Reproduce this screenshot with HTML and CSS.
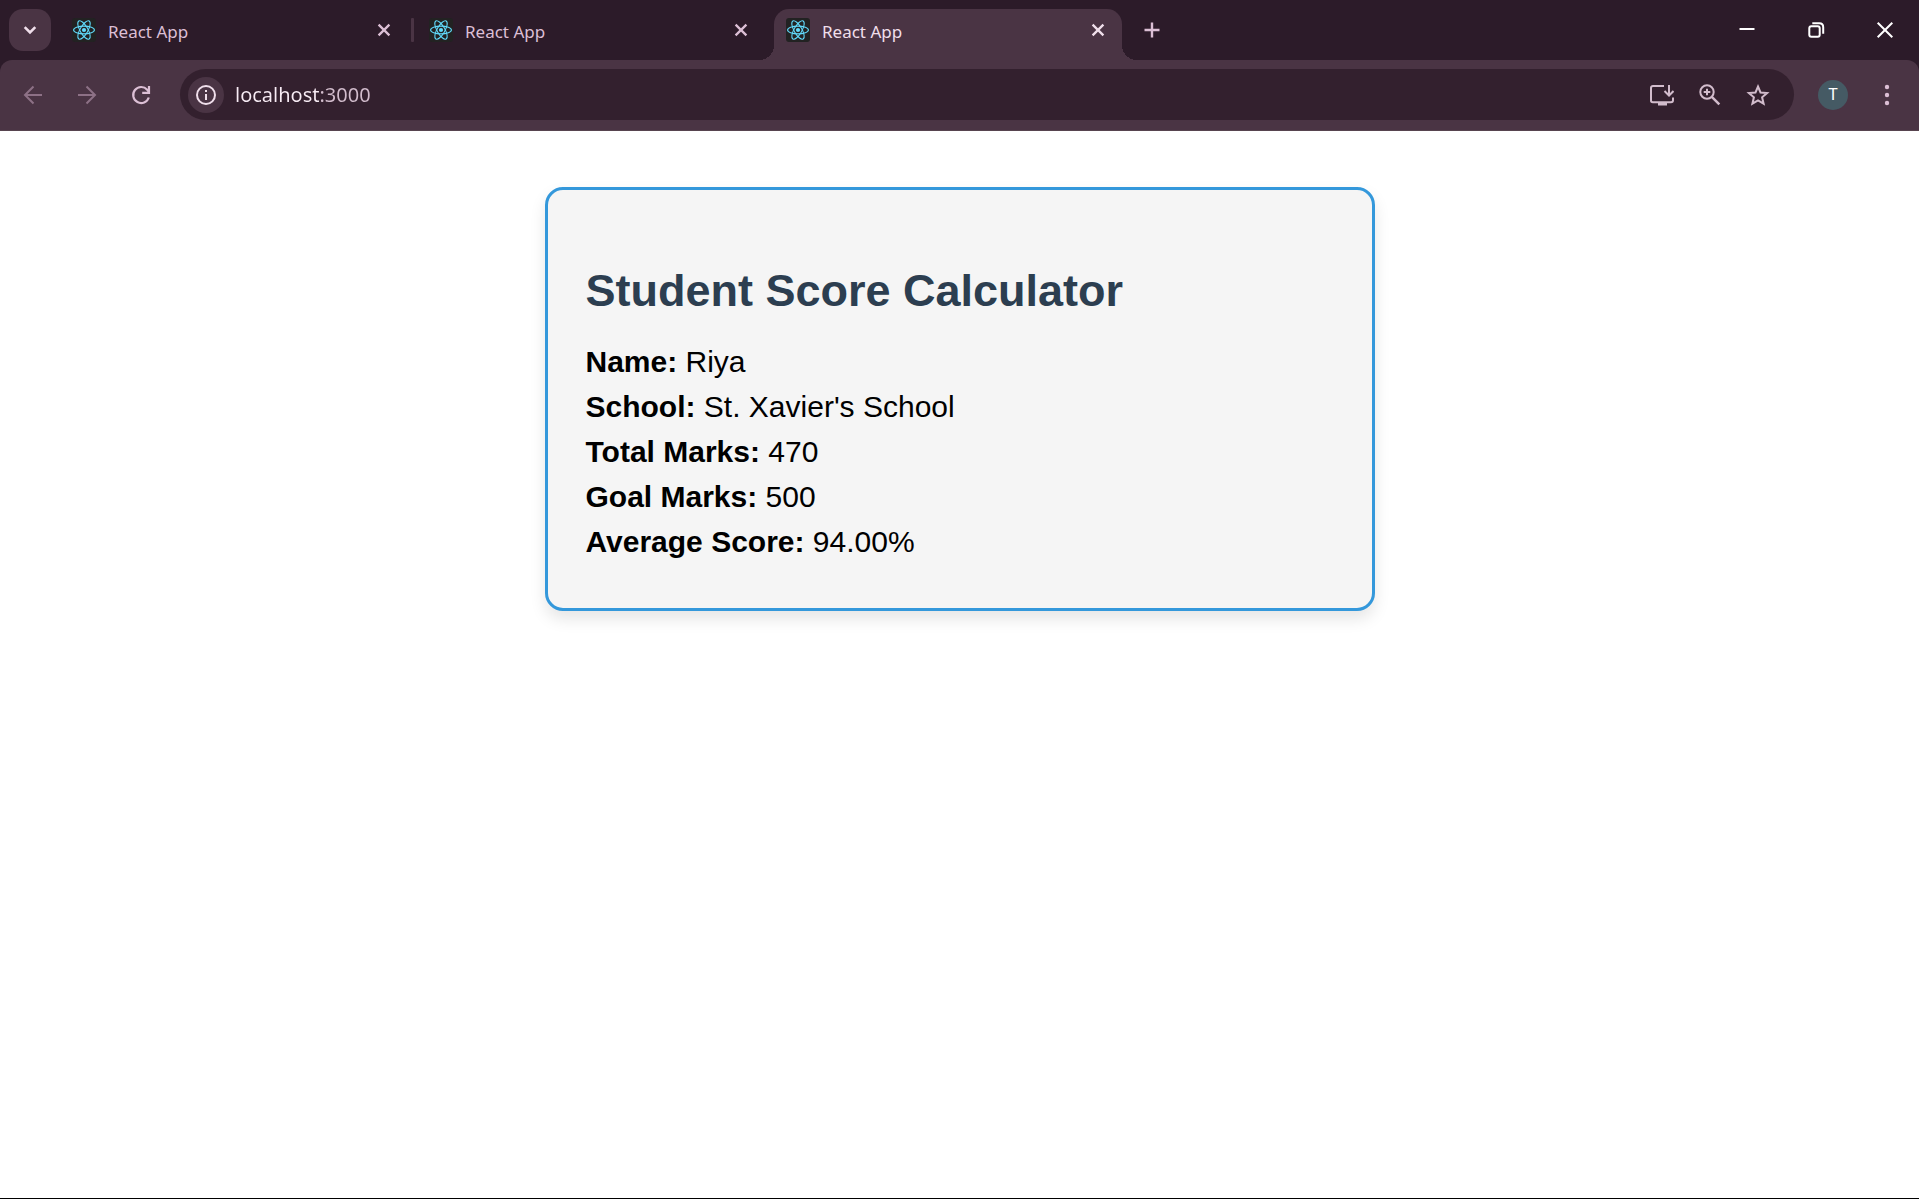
FILE: index.html
```html
<!DOCTYPE html>
<html lang="en">
<head>
<meta charset="utf-8">
<meta name="viewport" content="width=device-width, initial-scale=1">
<title>React App</title>
<link rel="stylesheet" href="styles.css">
</head>
<body>
<svg class="sprite" aria-hidden="true">
  <symbol id="react" viewBox="0 0 24 24">
    <g fill="none" stroke="#61dafb" stroke-width="1.1">
      <ellipse cx="12" cy="12" rx="10.4" ry="3.9"/>
      <ellipse cx="12" cy="12" rx="10.4" ry="3.9" transform="rotate(60 12 12)"/>
      <ellipse cx="12" cy="12" rx="10.4" ry="3.9" transform="rotate(120 12 12)"/>
    </g>
    <circle cx="12" cy="12" r="2.1" fill="#61dafb"/>
  </symbol>
  <symbol id="close" viewBox="0 0 24 24">
    <path d="M6.6 6.6l10.8 10.8M17.4 6.6L6.6 17.4" fill="none" stroke="currentColor" stroke-width="2.3"/>
  </symbol>
</svg>
<header class="browser">
  <div class="tab-strip">
    <button class="tab-search" aria-label="Search tabs">
      <svg class="icon" viewBox="0 0 24 24"><path d="M6.7 9.2l5.3 5.3 5.3-5.3" fill="none" stroke="currentColor" stroke-width="2.6"/></svg>
    </button>
    <nav class="tabs" aria-label="Tabs">
      <div class="tab">
        <svg class="favicon"><use href="#react"/></svg>
        <a class="tab-title" href="#">React App</a>
        <button class="tab-close" aria-label="Close tab"><svg class="icon"><use href="#close"/></svg></button>
      </div>
      <span class="separator"></span>
      <div class="tab">
        <svg class="favicon"><use href="#react"/></svg>
        <a class="tab-title" href="#">React App</a>
        <button class="tab-close" aria-label="Close tab"><svg class="icon"><use href="#close"/></svg></button>
      </div>
      <span class="separator separator-hidden"></span>
      <div class="tab tab-active">
        <svg class="favicon"><use href="#react"/></svg>
        <a class="tab-title" href="#" aria-current="page">React App</a>
        <button class="tab-close" aria-label="Close tab"><svg class="icon"><use href="#close"/></svg></button>
      </div>
    </nav>
    <button class="new-tab" aria-label="New tab">
      <svg class="icon" viewBox="0 0 24 24"><path d="M12 4.5v15M4.5 12h15" fill="none" stroke="currentColor" stroke-width="2.4"/></svg>
    </button>
    <div class="window-controls">
      <button aria-label="Minimize"><svg class="icon" viewBox="0 0 24 24"><path d="M4.5 11h15" fill="none" stroke="currentColor" stroke-width="2"/></svg></button>
      <button aria-label="Restore"><svg class="icon" viewBox="0 0 24 24" fill="none" stroke="currentColor" stroke-width="2"><rect x="5.3" y="8.3" width="10.4" height="10.4" rx="2"/><path d="M8.3 5.3h7c2.4 0 3.9 1.5 3.9 3.9v6.500"/></svg></button>
      <button aria-label="Close window"><svg class="icon" viewBox="0 0 24 24"><path d="M4.700 4.700l14.600 14.600M19.300 4.700L4.700 19.300" fill="none" stroke="currentColor" stroke-width="2"/></svg></button>
    </div>
  </div>
  <div class="toolbar">
    <div class="nav-buttons">
      <button class="dim" aria-label="Back"><svg class="icon" viewBox="0 0 24 24"><path d="M21 12H4.500M12.500 3.500L4 12l8.500 8.500" fill="none" stroke="currentColor" stroke-width="2"/></svg></button>
      <button class="dim" aria-label="Forward"><svg class="icon" viewBox="0 0 24 24"><path d="M3 12h16.500M11.500 3.500L20 12l-8.500 8.500" fill="none" stroke="currentColor" stroke-width="2"/></svg></button>
      <button aria-label="Reload"><svg class="icon" viewBox="0 0 24 24"><path d="M19.800 14.500A8 8 0 1 1 18.200 6.700L20 8.800M20 3v6.800h-6.800" fill="none" stroke="currentColor" stroke-width="2.200"/></svg></button>
    </div>
    <div class="omnibox">
      <button class="site-info" aria-label="Site information"><svg class="icon" viewBox="0 0 24 24"><circle cx="12" cy="12" r="9" fill="none" stroke="currentColor" stroke-width="2"/><path d="M11 11h2v6h-2zM11 7h2v2h-2z" fill="currentColor"/></svg></button>
      <input class="address" type="text" value="localhost:3000" aria-label="Address">
      <div class="omnibox-actions">
        <button aria-label="Install app"><svg class="icon" viewBox="0 0 24 24"><path d="M14 3H3a2 2 0 0 0-2 1.800V17.500A1.800 1.800 0 0 0 2.800 19.300H21a2 2 0 0 0 2-2V14.500M19 2v10M14.500 8l4.500 4.500L23.500 8" fill="none" stroke="currentColor" stroke-width="2"/><path d="M8 19h9v3.500H8z" fill="currentColor"/></svg></button>
        <button aria-label="Zoom"><svg class="icon" viewBox="0 0 24 24" fill="none" stroke="currentColor"><circle cx="9" cy="9" r="6.700" stroke-width="2"/><path d="M13.800 13.800l7.500 7.500" stroke-width="2.500"/><path d="M9 5.700v6.600M5.700 9h6.600" stroke-width="2"/></svg></button>
        <button aria-label="Bookmark"><svg class="icon" viewBox="0 0 24 24"><path d="M12 3.500l2.500 6 6.600.500-5 4.300 1.500 6.400L12 17.300l-5.600 3.400 1.500-6.400-5-4.300 6.600-.500z" fill="none" stroke="currentColor" stroke-width="2"/></svg></button>
      </div>
    </div>
    <button class="avatar" aria-label="Profile">T</button>
    <button class="menu" aria-label="Menu"><svg class="icon" viewBox="0 0 24 24" fill="currentColor"><circle cx="12" cy="4" r="2.200"/><circle cx="12" cy="12" r="2.200"/><circle cx="12" cy="20" r="2.200"/></svg></button>
  </div>
</header>
<main class="page">
  <section class="score-card">
    <h2>Student Score Calculator</h2>
    <p><strong>Name:</strong> Riya</p>
    <p><strong>School:</strong> St. Xavier's School</p>
    <p><strong>Total Marks:</strong> 470</p>
    <p><strong>Goal Marks:</strong> 500</p>
    <p><strong>Average Score:</strong> 94.00%</p>
  </section>
</main>
</body>
</html>
```
FILE: styles.css
```css
:root {
  --strip: #2c1b29;
  --chrome: #4a3444;
  --field: #33202e;
  --text: #dcbfd5;
  --text-bright: #f0dfeb;
}

* {
  box-sizing: border-box;
}

body {
  margin: 0;
  min-height: 100vh;
  background: #fff;
  border-bottom: 1px solid #000;
  font-family: "Liberation Sans", Arial, sans-serif;
}

button {
  display: flex;
  align-items: center;
  justify-content: center;
  flex: none;
  padding: 0;
  border: 0;
  background: none;
  color: inherit;
  font: inherit;
}

.sprite {
  display: none;
}

.icon,
.favicon {
  display: block;
  flex: none;
  width: 24px;
  height: 24px;
}

/* Browser frame */
.browser {
  background: var(--strip);
  color: var(--text);
  font-family: "Noto Sans", sans-serif;
}

.tab-strip {
  display: flex;
  align-items: center;
  height: 60px;
  padding-left: 9px;
}

.tab-search {
  width: 42px;
  height: 42px;
  margin-right: 9px;
  border-radius: 14px;
  background: var(--chrome);
  color: var(--text-bright);
}

.tabs {
  display: flex;
  align-items: center;
  height: 60px;
}

.tab {
  position: relative;
  display: flex;
  align-items: center;
  gap: 12px;
  width: 348px;
  height: 42px;
  padding: 0 12px;
}

.favicon {
  border-radius: 3px;
  background: #222;
}

.tab-title {
  flex: 1;
  padding-top: 3px;
  color: inherit;
  font-size: 17px;
  line-height: 24px;
  text-decoration: none;
}

.separator {
  width: 3px;
  height: 24px;
  margin: 0 3px;
  border-radius: 1px;
  background: var(--chrome);
}

.separator-hidden {
  background: none;
}

.tab-active {
  align-self: flex-end;
  height: 51px;
  padding-bottom: 9px;
  border-radius: 15px 15px 0 0;
  background: var(--chrome);
  color: var(--text-bright);
}

.tab-active::before,
.tab-active::after {
  content: "";
  position: absolute;
  bottom: 0;
  width: 15px;
  height: 15px;
}

.tab-active::before {
  right: 100%;
  background: radial-gradient(circle at 0 0, transparent 15px, var(--chrome) 15px);
}

.tab-active::after {
  left: 100%;
  background: radial-gradient(circle at 100% 0, transparent 15px, var(--chrome) 15px);
}

.new-tab {
  width: 42px;
  height: 42px;
  margin-left: 9px;
}

.window-controls {
  display: flex;
  margin-left: auto;
  color: #fff;
}

.window-controls button {
  width: 69px;
  height: 60px;
}

.toolbar {
  display: flex;
  align-items: center;
  height: 71px;
  padding: 0 14px 1px 6px;
  border-bottom: 1px solid #57444f;
  border-radius: 12px 12px 0 0;
  background: var(--chrome);
}

.nav-buttons {
  display: flex;
  margin-right: 12px;
}

.nav-buttons button {
  width: 54px;
  height: 51px;
}

.dim {
  color: #8d7186;
}

.omnibox {
  display: flex;
  align-items: center;
  flex: 1;
  height: 51px;
  padding: 0 12px 0 8px;
  border-radius: 26px;
  background: var(--field);
}

.site-info {
  width: 36px;
  height: 36px;
  border-radius: 50%;
  background: var(--chrome);
  color: var(--text-bright);
}

/* The port is drawn dimmer than the host name */
.address {
  flex: 1;
  min-width: 0;
  margin-left: 11px;
  padding: 0;
  border: 0;
  outline: 0;
  background: linear-gradient(90deg, #f8ecf5 86px, #d2bccc 86px);
  background-clip: text;
  -webkit-background-clip: text;
  color: transparent;
  caret-color: var(--text-bright);
  font-family: "Noto Sans", sans-serif;
  font-size: 20px;
  line-height: 30px;
}

.omnibox-actions {
  display: flex;
  color: #d2bccc;
}

.omnibox-actions button {
  width: 48px;
  height: 48px;
}

.avatar {
  width: 30px;
  height: 30px;
  margin: 0 21px 0 24px;
  border-radius: 50%;
  background: #455a64;
  color: #fff;
  font-family: Roboto, sans-serif;
  font-size: 16px;
}

.menu {
  width: 36px;
  height: 48px;
}

/* Page content */
.page {
  padding: 56px 20px;
}

.score-card {
  max-width: 830px;
  margin: 0 auto;
  padding: 38px;
  border: 3px solid #3498db;
  border-radius: 18px;
  background: #f5f5f5;
  box-shadow: 0 8px 16px rgba(0, 0, 0, 0.1);
  color: #000;
}

.score-card h2 {
  margin: 37px 0 28px;
  color: #2c3e50;
  font-size: 45px;
  line-height: 52px;
}

.score-card p {
  margin: 11px 0;
  font-size: 30px;
  line-height: 34px;
}
```
